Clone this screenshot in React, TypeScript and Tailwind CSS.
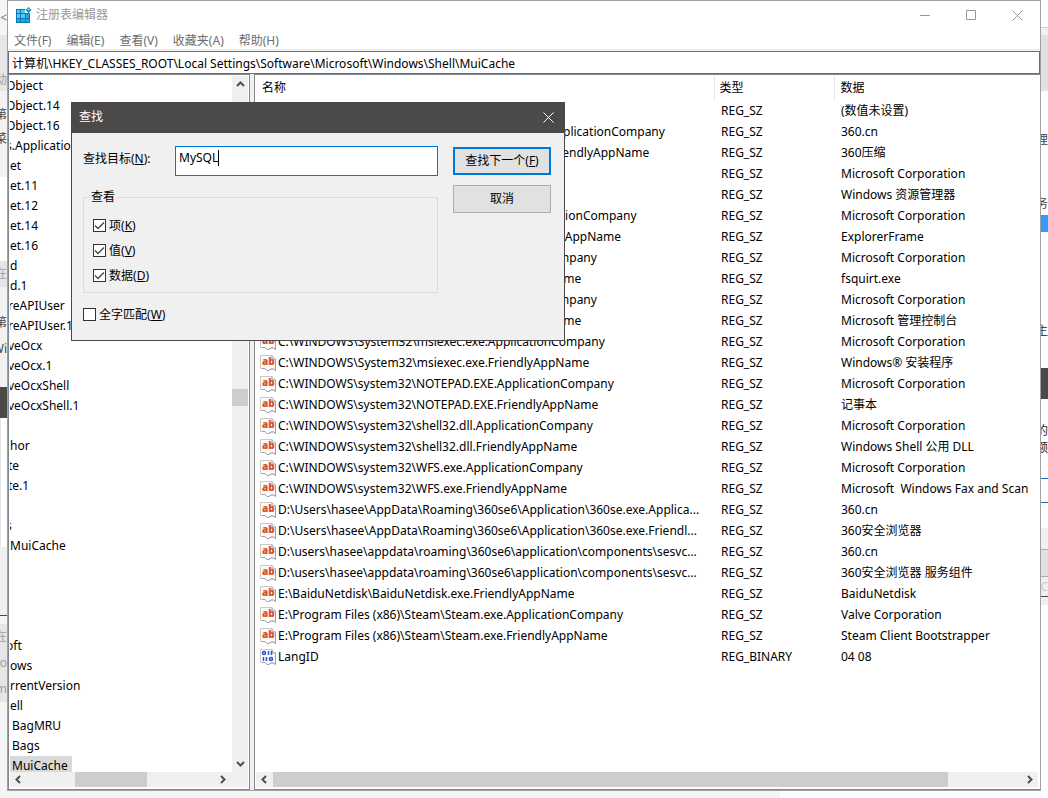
import React, { useState } from 'react';
import clsx from 'clsx';

interface Segment {
  size: string;
  text?: string;
}

interface RegistryValue {
  name: string;
  type?: string;
  data: string;
}

const leftEdge: Segment[] = [
  { size: 'h-[35px] bg-[#f5f5f5] text-[#777]', text: '<' },
  { size: 'h-[33px] bg-[#e6e6e6]' },
  { size: 'h-[23px] bg-[#e6e6e6] text-[#a0a0a0]', text: '动' },
  { size: 'h-[12px] bg-[#f2f2f2]' },
  { size: 'h-[24px] bg-[#f2f2f2] text-[#444]', text: '第' },
  { size: 'h-[24px] bg-[#f2f2f2] text-[#444]', text: '菜' },
  { size: 'h-[26px] bg-[#f2f2f2]' },
  { size: 'h-[84px] bg-white' },
  { size: 'h-[26px] bg-[#e6e6e6] text-[#a0a0a0]', text: '在' },
  { size: 'h-[24px] bg-[#f2f2f2]' },
  { size: 'h-[24px] bg-[#f2f2f2] text-[#444]', text: '第' },
  { size: 'h-[28px] bg-[#f2f2f2] text-[#444]', text: 'Wi' },
  { size: 'h-[24px] bg-[#f2f2f2]' },
  { size: 'h-[31px] bg-[#4c4a48]' },
  { size: 'h-[129px] bg-white border-l border-[#e6e6e6]' },
  { size: 'h-[69px] bg-[#f0f0f0] border-b border-[#4c4a48]' },
  { size: 'h-[8px] bg-[#f5f5f5]' },
  { size: 'h-[26px] bg-[#e6e6e6] text-[#a0a0a0]', text: '在' },
  { size: 'h-[26px] bg-[#e6e6e6] text-[#a0a0a0]', text: 'ro' },
  { size: 'h-[26px] bg-[#e6e6e6] text-[#a0a0a0]', text: 'm' },
  { size: 'grow bg-[#f5f5f5]' },
];

const rightEdge: Segment[] = [
  { size: 'h-[28px] bg-white border-b border-[#d0d0d0]' },
  { size: 'h-[7px] bg-[#f0f0f0]' },
  { size: 'h-[56px] bg-[#e1e1e1]' },
  { size: 'h-[36px] bg-white' },
  { size: 'h-[26px] bg-white text-[#444]', text: '理' },
  { size: 'h-[40px] bg-white' },
  { size: 'h-[22px] bg-white text-[#444]', text: '务' },
  { size: 'h-[17px] bg-[#3399ff]' },
  { size: 'h-[86px] bg-white' },
  { size: 'h-[26px] bg-white text-[#444]', text: '主' },
  { size: 'h-[24px] bg-white' },
  { size: 'h-[31px] bg-[#4c4a48]' },
  { size: 'h-[23px] bg-white' },
  { size: 'h-[17px] bg-white text-[#222]', text: '的' },
  { size: 'h-[17px] bg-white text-[#222]', text: '额' },
  { size: 'h-[22px] bg-white' },
  { size: 'h-[25px] bg-white border-y border-[#0078d7]' },
  { size: 'h-[25px] bg-white' },
  { size: 'h-[21px] bg-[#f0f0f0]' },
  { size: 'h-[28px] bg-[#e1e1e1] border-y border-[#adadad]' },
  { size: 'h-[20px] bg-[#f0f0f0] text-[#ccc] border-b border-[#4c4a48]', text: 'C' },
  { size: 'h-[8px] bg-[#f0f0f0]' },
  { size: 'grow bg-white' },
];

const menus = [
  ['文件', 'F'],
  ['编辑', 'E'],
  ['查看', 'V'],
  ['收藏夹', 'A'],
  ['帮助', 'H'],
];

// The pane is scrolled sideways, so every level starts left of or near its edge
const tree: { text: string; indent: string }[] = [
  { text: 'Object', indent: '-ml-1' },
  { text: 'Object.14', indent: '-ml-1' },
  { text: 'Object.16', indent: '-ml-1' },
  { text: 's.Application', indent: '-ml-1' },
  { text: 'et', indent: '' },
  { text: 'et.11', indent: '' },
  { text: 'et.12', indent: '' },
  { text: 'et.14', indent: '' },
  { text: 'et.16', indent: '' },
  { text: 'd', indent: '' },
  { text: 'd.1', indent: '' },
  { text: 'reAPIUser', indent: '-ml-0.5' },
  { text: 'reAPIUser.1', indent: '-ml-0.5' },
  { text: 'veOcx', indent: '-ml-0.5' },
  { text: 'veOcx.1', indent: '-ml-0.5' },
  { text: 'veOcxShell', indent: '-ml-0.5' },
  { text: 'veOcxShell.1', indent: '-ml-0.5' },
  { text: '', indent: '' },
  { text: 'hor', indent: '' },
  { text: 'te', indent: '-ml-0.5' },
  { text: 'te.1', indent: '-ml-0.5' },
  { text: '', indent: '' },
  { text: 's', indent: '-ml-1' },
  { text: 'MuiCache', indent: '' },
  { text: '', indent: '' },
  { text: '', indent: '' },
  { text: '', indent: '' },
  { text: '', indent: '' },
  { text: 'oft', indent: '-ml-1' },
  { text: 'ows', indent: '' },
  { text: 'rrentVersion', indent: '' },
  { text: 'ell', indent: '' },
  { text: 'BagMRU', indent: 'pl-0.5' },
  { text: 'Bags', indent: 'pl-0.5' },
  { text: 'MuiCache', indent: 'pl-0.5 pr-1 bg-[#d9d9d9]' },
];

const values: RegistryValue[] = [
  { name: '(默认)', data: '(数值未设置)' },
  { name: 'C:\\Program Files (x86)\\360\\360zip64\\360zip.exe.ApplicationCompany', data: '360.cn' },
  { name: 'C:\\Program Files (x86)\\360\\360zip64\\360zip.exe.FriendlyAppName', data: '360压缩' },
  { name: 'C:\\Windows\\explorer.exe.ApplicationCompany', data: 'Microsoft Corporation' },
  { name: 'C:\\Windows\\explorer.exe.FriendlyAppName', data: 'Windows 资源管理器' },
  { name: 'C:\\WINDOWS\\System32\\ExplorerFrame.dll.ApplicationCompany', data: 'Microsoft Corporation' },
  { name: 'C:\\WINDOWS\\System32\\ExplorerFrame.dll.FriendlyAppName', data: 'ExplorerFrame' },
  { name: 'C:\\Windows\\SysWOW64\\fsquirt.exe.ApplicationCompany', data: 'Microsoft Corporation' },
  { name: 'C:\\Windows\\SysWOW64\\fsquirt.exe.FriendlyAppName', data: 'fsquirt.exe' },
  { name: 'C:\\WINDOWS\\SysWOW64\\mmc.exe.ApplicationCompany', data: 'Microsoft Corporation' },
  { name: 'C:\\WINDOWS\\SysWOW64\\mmc.exe.FriendlyAppName', data: 'Microsoft 管理控制台' },
  { name: 'C:\\WINDOWS\\System32\\msiexec.exe.ApplicationCompany', data: 'Microsoft Corporation' },
  { name: 'C:\\WINDOWS\\System32\\msiexec.exe.FriendlyAppName', data: 'Windows® 安装程序' },
  { name: 'C:\\WINDOWS\\system32\\NOTEPAD.EXE.ApplicationCompany', data: 'Microsoft Corporation' },
  { name: 'C:\\WINDOWS\\system32\\NOTEPAD.EXE.FriendlyAppName', data: '记事本' },
  { name: 'C:\\WINDOWS\\system32\\shell32.dll.ApplicationCompany', data: 'Microsoft Corporation' },
  { name: 'C:\\WINDOWS\\system32\\shell32.dll.FriendlyAppName', data: 'Windows Shell 公用 DLL' },
  { name: 'C:\\WINDOWS\\system32\\WFS.exe.ApplicationCompany', data: 'Microsoft Corporation' },
  { name: 'C:\\WINDOWS\\system32\\WFS.exe.FriendlyAppName', data: 'Microsoft  Windows Fax and Scan' },
  { name: 'D:\\Users\\hasee\\AppData\\Roaming\\360se6\\Application\\360se.exe.Applica...', data: '360.cn' },
  { name: 'D:\\Users\\hasee\\AppData\\Roaming\\360se6\\Application\\360se.exe.Friendl...', data: '360安全浏览器' },
  { name: 'D:\\users\\hasee\\appdata\\roaming\\360se6\\application\\components\\sesvc...', data: '360.cn' },
  { name: 'D:\\users\\hasee\\appdata\\roaming\\360se6\\application\\components\\sesvc...', data: '360安全浏览器 服务组件' },
  { name: 'E:\\BaiduNetdisk\\BaiduNetdisk.exe.FriendlyAppName', data: 'BaiduNetdisk' },
  { name: 'E:\\Program Files (x86)\\Steam\\Steam.exe.ApplicationCompany', data: 'Valve Corporation' },
  { name: 'E:\\Program Files (x86)\\Steam\\Steam.exe.FriendlyAppName', data: 'Steam Client Bootstrapper' },
  { name: 'LangID', type: 'REG_BINARY', data: '04 08' },
];

function RegeditIcon() {
  return (
    <svg width="16" height="16" viewBox="0 0 16 16" aria-hidden="true">
      <path d="M0 2h9v4h5v10H0z" fill="#0b79b5" />
      <path d="M1 3h3v3H1zM5 3h4v3H5zM1 7h3v4H1zM5 7h4v4H5z" fill="#52c8f7" />
      <path d="M10 7h3v4h-3zM1 12h3v3H1zM5 12h4v3H5zM10 12h3v3h-3z" fill="#1ea7ea" />
      <path d="M12.500 0l3 3-3 3-3-3z" fill="#1583bd" />
      <path d="M12.500 1l1.500 1.500-1.500 1.500-1.500-1.500z" fill="#5fd0f8" />
    </svg>
  );
}

function ValueIcon({ binary }: { binary: boolean }) {
  return (
    <svg width="16" height="16" viewBox="0 0 16 16" className="shrink-0" aria-hidden="true">
      <path d="M.5.5H12l3.500 3.500v11.500l-2-1.500-2.500 0-2 1.500H7L5 13.500H.5z" fill="#fcfcfc" stroke="#c9c9c9" />
      <path d="M15.500 4v11.500l-2-1.500H11l-2 1.500H7L5 13.500H2M12 .5V4h3.500" fill="none" stroke="#a0a0a0" />
      {binary ? (
        <g fill="none" stroke="#2b50d8" strokeWidth="1.500">
          <circle cx="4" cy="4" r="1.500" />
          <path d="M8.500 2v4M11.500 2v4M3.500 8v4M6.500 8v4" />
          <circle cx="11" cy="10" r="1.500" />
        </g>
      ) : (
        <text x="2" y="10" fontSize="10" fontWeight="800" fill="#d9512c" fontFamily="Open Sans">
          ab
        </text>
      )}
    </svg>
  );
}

function Chevron({ d, label, className }: { d: string; label: string; className: string }) {
  return (
    <button type="button" aria-label={label} className={clsx('flex shrink-0 items-center justify-center', className)}>
      <svg width="9" height="9" viewBox="0 0 9 9" fill="none" stroke="#505050" strokeWidth="2">
        <path d={d} />
      </svg>
    </button>
  );
}

const LEFT = 'M6 1L2.500 4.500L6 8';
const RIGHT = 'M3 1l3.500 3.500L3 8';
const UP = 'M1 6l3.500-3.500L8 6';
const DOWN = 'M1 3l3.500 3.500L8 3';

function EdgeStrip({ segments }: { segments: Segment[] }) {
  return (
    <div className="flex w-[7px] shrink-0 flex-col overflow-hidden" aria-hidden="true">
      {segments.map((segment, i) => (
        <div key={i} className={clsx('flex shrink-0 items-center justify-end overflow-hidden whitespace-nowrap', segment.size)}>
          {segment.text}
        </div>
      ))}
    </div>
  );
}

function TreePane() {
  return (
    <nav className="flex w-[242px] shrink-0 flex-col border border-[#828790] bg-white pb-0.5" aria-label="项">
      <div className="flex min-h-0 grow">
        <ul className="mt-px ml-px min-w-0 grow basis-0 overflow-hidden">
          {tree.map((item, i) => (
            <li key={i} className="flex h-5">
              <span className={clsx('whitespace-nowrap leading-5', item.indent)}>{item.text}</span>
            </li>
          ))}
        </ul>
        <div className="mt-px mr-px flex w-4 shrink-0 flex-col bg-[#f0f0f0]">
          <Chevron d={UP} label="向上滚动" className="h-[17px]" />
          <div className="grow-[296]" />
          <div className="h-[17px] bg-[#cdcdcd]" />
          <div className="grow-[348]" />
          <Chevron d={DOWN} label="向下滚动" className="h-[17px]" />
        </div>
      </div>
      <div className="mx-px flex h-[15px] shrink-0 bg-[#f0f0f0]">
        <Chevron d={LEFT} label="向左滚动" className="w-4" />
        <div className="grow-[50]" />
        <div className="w-[72px] bg-[#cdcdcd]" />
        <div className="grow-[68]" />
        <Chevron d={RIGHT} label="向右滚动" className="w-4" />
        <div className="w-[18px]" />
      </div>
    </nav>
  );
}

function ValuePane() {
  return (
    <section className="flex min-w-0 grow flex-col border border-r-0 border-[#828790] bg-white pb-0.5">
      <div className="min-h-0 grow basis-0 overflow-hidden">
        <table className="w-full table-fixed border-collapse text-left">
          <thead>
            <tr className="h-[25px]">
              <th className="w-[459px] border-r border-[#e5e5e5] p-0 pl-[7px] font-normal">名称</th>
              <th className="w-[120px] border-r border-[#e5e5e5] p-0 pl-[5px] font-normal">类型</th>
              <th className="p-0 pl-[6px] font-normal">数据</th>
            </tr>
          </thead>
          <tbody>
            {values.map((value, i) => (
              <tr key={i} className="h-[21px]">
                <td className="p-0 pl-[5px]">
                  <div className="flex h-[21px] items-center gap-0.5 overflow-hidden whitespace-nowrap">
                    <ValueIcon binary={value.type === 'REG_BINARY'} />
                    {value.name}
                  </div>
                </td>
                <td className="p-0 pl-[7px]">{value.type ?? 'REG_SZ'}</td>
                <td className="overflow-hidden p-0 pl-[7px] whitespace-pre">{value.data}</td>
              </tr>
            ))}
          </tbody>
        </table>
      </div>
      <div className="mr-0.5 ml-px flex h-[15px] shrink-0 bg-[#f0f0f0]">
        <Chevron d={LEFT} label="向左滚动" className="w-[17px]" />
        <div className="grow-[675] bg-[#cdcdcd]" />
        <div className="grow-[73]" />
        <Chevron d={RIGHT} label="向右滚动" className="w-[17px]" />
      </div>
    </section>
  );
}

interface CheckProps {
  label: string;
  hotkey: string;
  initial: boolean;
}

function Check({ label, hotkey, initial }: CheckProps) {
  const [checked, setChecked] = useState(initial);

  return (
    <label className="flex h-[25px] items-center gap-[3px]">
      <span className="grid">
        <input
          type="checkbox"
          checked={checked}
          onChange={() => setChecked(!checked)}
          className="col-start-1 row-start-1 size-[13px] appearance-none border border-[#333] bg-white"
        />
        {checked && (
          <svg className="pointer-events-none col-start-1 row-start-1" width="13" height="13" viewBox="0 0 13 13" fill="none" stroke="#444" strokeWidth="1.300">
            <path d="M2 6.500l3 3 6-6" />
          </svg>
        )}
      </span>
      <span>
        {label}(<u>{hotkey}</u>)
      </span>
    </label>
  );
}

function FindDialog() {
  const [target, setTarget] = useState('MySQL');

  return (
    <div role="dialog" aria-label="查找" className="absolute top-[101px] left-[63px] w-[494px] border border-[#4c4a48] bg-[#f0f0f0]">
      <header className="flex h-[30px] items-center justify-between bg-[#4c4a48] pr-2.5 pb-0.5 pl-[7px] text-white">
        <h2>查找</h2>
        <button type="button" aria-label="关闭">
          <svg width="11" height="11" viewBox="0 0 11 11" stroke="#fff">
            <path d="M.5.5l10 10M10.500.5l-10 10" />
          </svg>
        </button>
      </header>
      <div className="flex gap-[15px] pt-[13px] pr-[13px] pb-[13px] pl-[11px]">
        <div className="min-w-0 grow">
          <div className="flex">
            <label htmlFor="find-target" className="w-[92px] shrink-0 pt-1">
              查找目标(<u>N</u>):
            </label>
            <div className="flex h-[30px] min-w-0 grow items-start border border-[#0078d7] bg-white px-[3px] pt-[3px]">
              <input
                id="find-target"
                value={target}
                onChange={(e) => setTarget(e.target.value)}
                className="field-sizing-content h-4 outline-none"
              />
              <span className="h-4 w-px bg-black" />
            </div>
          </div>
          <fieldset className="mt-3 border border-[#dcdcdc] pb-1 pl-[9px]">
            <legend className="-ml-1 px-0.5">查看</legend>
            <div className="pt-[7px]">
              <Check label="项" hotkey="K" initial />
              <Check label="值" hotkey="V" initial />
              <Check label="数据" hotkey="D" initial />
            </div>
          </fieldset>
          <div className="mt-[9px]">
            <Check label="全字匹配" hotkey="W" initial={false} />
          </div>
        </div>
        <div className="flex w-[98px] shrink-0 flex-col gap-2.5 pt-px">
          <button type="button" className="h-7 border-2 border-[#0078d7] bg-[#e1e1e1]">
            查找下一个(<u>F</u>)
          </button>
          <button type="button" className="h-7 border border-[#adadad] bg-[#e1e1e1]">
            取消
          </button>
        </div>
      </div>
    </div>
  );
}

export default function App() {
  return (
    <div className="flex h-screen overflow-hidden bg-white font-['Noto_Sans','Noto_Sans_CJK_SC',sans-serif] text-[12px] leading-[18px] text-black">
      <EdgeStrip segments={leftEdge} />
      <div className="flex min-w-0 grow flex-col">
        <main className="relative flex min-h-0 grow flex-col border border-[#a0a0a0] bg-[#f0f0f0]">
          <header className="flex h-7 shrink-0 items-center bg-white pl-2 text-[#999]">
            <RegeditIcon />
            <h1 className="grow pl-1">注册表编辑器</h1>
            <button type="button" aria-label="最小化" className="flex w-[46px] justify-center">
              <svg width="11" height="11" viewBox="0 0 11 11" stroke="#999">
                <path d="M0 5.500h10" />
              </svg>
            </button>
            <button type="button" aria-label="最大化" className="flex w-[46px] justify-center">
              <svg width="11" height="11" viewBox="0 0 11 11" fill="none" stroke="#999">
                <path d="M.5.5h9v9h-9z" />
              </svg>
            </button>
            <button type="button" aria-label="关闭" className="flex w-[46px] justify-center">
              <svg width="11" height="11" viewBox="0 0 11 11" stroke="#999">
                <path d="M.5.5l10 10M10.500.5l-10 10" />
              </svg>
            </button>
          </header>
          <nav className="flex h-5 shrink-0 items-center gap-[15px] bg-white pt-1 pl-1.5 text-[#6d6d6d]">
            {menus.map(([label, key]) => (
              <button key={key} type="button">
                {label}({key})
              </button>
            ))}
          </nav>
          <input
            aria-label="地址"
            readOnly
            value="计算机\HKEY_CLASSES_ROOT\Local Settings\Software\Microsoft\Windows\Shell\MuiCache"
            className="mt-0.5 h-[23px] shrink-0 border border-[#6e6e73] bg-white px-[3px] outline-none"
          />
          <div className="flex min-h-0 grow gap-1">
            <TreePane />
            <ValuePane />
          </div>
          <FindDialog />
        </main>
        <div className="flex h-[7px] shrink-0">
          <div className="grow-[773] bg-[#f5f5f5]" />
          <div className="grow-[261] bg-white" />
        </div>
      </div>
      <EdgeStrip segments={rightEdge} />
    </div>
  );
}
